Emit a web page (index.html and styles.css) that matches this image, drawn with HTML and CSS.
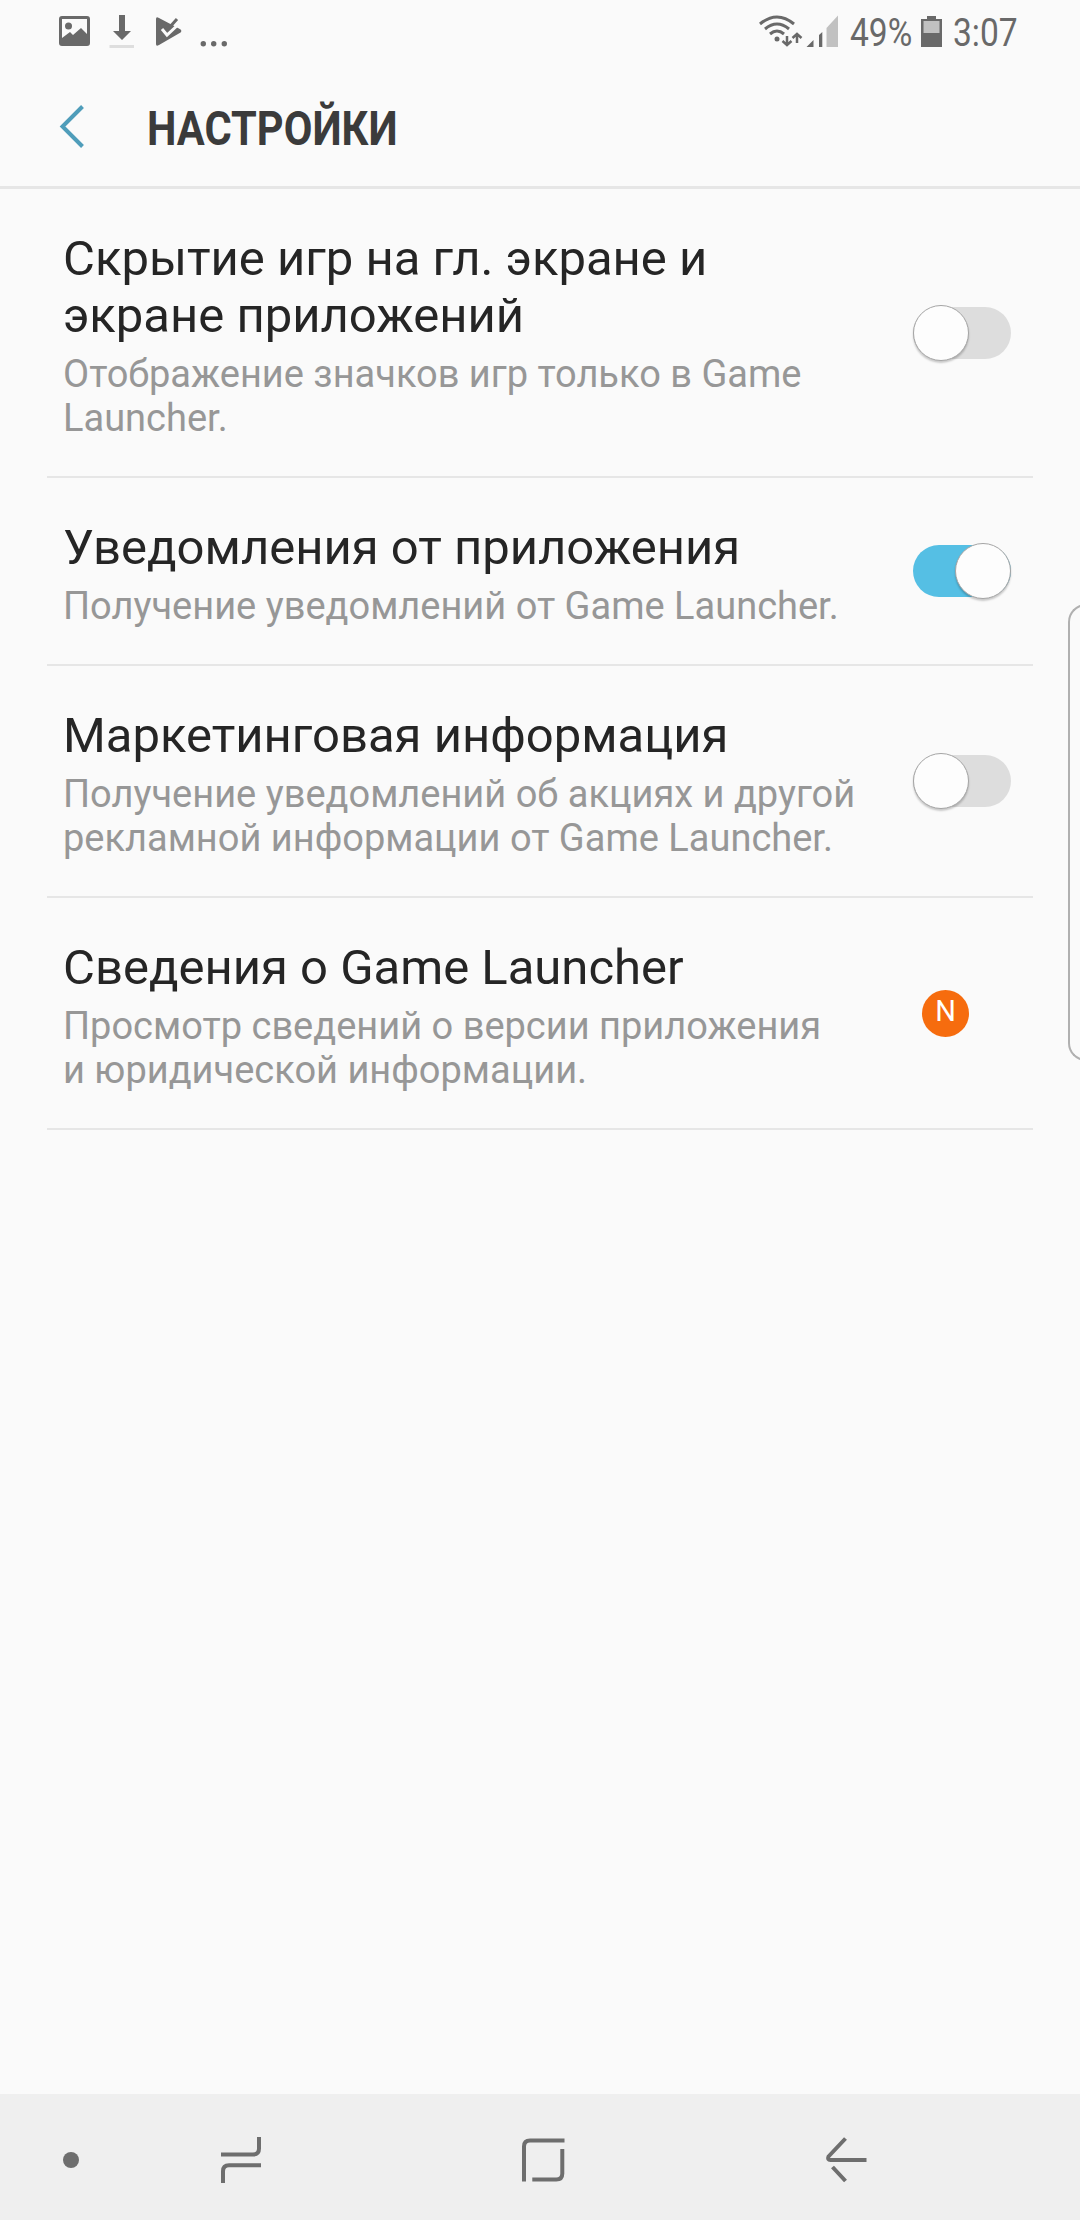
FILE: index.html
```html
<!DOCTYPE html>
<html lang="ru">
<head>
  <meta charset="UTF-8" />
  <meta name="viewport" content="width=device-width, initial-scale=1.0"/>
  <title>Настройки</title>
  <link rel="stylesheet" href="styles.css">
</head>
<body>

  <!-- Статус-бар -->
  <div class="status-bar">
    <svg class="status-left" width="170" height="60" viewBox="0 0 170 60">
      <path fill="#696969" fill-rule="evenodd" d="M3 16h25q3 0 3 3v24q0 3-3 3H3q-3 0-3-3V19q0-3 3-3zM3 19v19l8-6 3 3 8-7 6 6V19z"/>
      <circle cx="9.500" cy="26" r="3.500" fill="#696969"/>
      <path fill="#696969" d="M60 15h6v16h6l-9 9-9-9h6z"/>
      <path fill="#dedede" d="M50.500 45h24.500v3h-24.500z"/>
      <path fill="#696969" d="M97 19q0-3 3-1l19 10q7 3 0 6l-19 11q-3 2-3-1z"/>
      <path fill="none" stroke="#fafafa" stroke-width="3" d="M103 29l5 6 14-13"/>
      <path fill="none" stroke="#696969" stroke-width="3" d="M105 25l4 4 9-10"/>
      <g fill="#696969"><circle cx="144.300" cy="43.700" r="2.700"/><circle cx="154.700" cy="43.700" r="2.700"/><circle cx="165.300" cy="43.700" r="2.700"/></g>
    </svg>
    <div class="status-right">
      <svg width="82" height="60" viewBox="0 0 82 60">
        <g fill="none" stroke="#696969" stroke-width="3">
          <path d="M1 24q17-14 34 0"/>
          <path d="M6 29q12-10 24 0"/>
          <path d="M11 34q7-6 14 0"/>
          <path d="M28 36v9M23.500 41l4.500 4 4.500-4M38 43v-9M33.500 38l4.500-4 4.500 4" stroke-width="2.500"/>
        </g>
        <circle cx="18" cy="39" r="2.500" fill="#696969"/>
        <path fill="#696969" d="M47.500 47h7v-7zM60 47h3.300V32L60 35z"/>
        <path fill="#c1c1c1" d="M67.500 47V28L79 15.500V47z"/>
      </svg>
      <span class="status-text percent">49%</span>
      <svg class="battery" width="21" height="60" viewBox="0 0 21 60">
        <path fill="#696969" d="M6 16h9v3h6v28H0V19h6z"/>
        <path fill="#c1c1c1" d="M2.500 21h16v12h-16z"/>
      </svg>
      <span class="status-text clock">3:07</span>
    </div>
  </div>

  <header class="header">
    <svg width="26" height="44" viewBox="0 0 26 44">
      <path fill="none" stroke="#4f9dba" stroke-width="4" d="M23.500 2.500L3.500 22.500l20 20"/>
    </svg>
    <h1>НАСТРОЙКИ</h1>
  </header>

  <main class="list">
    <div class="item">
      <div class="text">
        <h2>Скрытие игр на гл. экране и<br>экране приложений</h2>
        <p>Отображение значков игр только в Game<br>Launcher.</p>
      </div>
      <div class="switch"><span class="thumb"></span></div>
    </div>
    <div class="item">
      <div class="text">
        <h2>Уведомления от приложения</h2>
        <p>Получение уведомлений от Game Launcher.</p>
      </div>
      <div class="switch on"><span class="thumb"></span></div>
    </div>
    <div class="item">
      <div class="text">
        <h2>Маркетинговая информация</h2>
        <p>Получение уведомлений об акциях и другой<br>рекламной информации от Game Launcher.</p>
      </div>
      <div class="switch"><span class="thumb"></span></div>
    </div>
    <div class="item">
      <div class="text">
        <h2>Сведения о Game Launcher</h2>
        <p>Просмотр сведений о версии приложения<br>и юридической информации.</p>
      </div>
      <span class="badge">N</span>
    </div>
  </main>

  <!-- Боковая панель Edge -->
  <div class="edge-handle"></div>

  <!-- Навигация -->
  <nav class="nav-bar">
    <span class="dot"></span>
    <svg class="recents" width="42" height="48" viewBox="0 0 42 48" fill="none" stroke="#6e6e6e" stroke-width="4">
      <path d="M1 18.500h32q6 0 6-6V1M41 29.300H9q-6 0-6 6V47"/>
    </svg>
    <svg class="home" width="44" height="46" viewBox="0 0 44 46" fill="none" stroke="#6e6e6e" stroke-width="4">
      <path d="M2 44.500V9.500q0-6 6-6h34.500M40.300 12v24.500q0 6-6 6h-24"/>
    </svg>
    <svg class="back" width="42" height="48" viewBox="0 0 42 48" fill="none" stroke="#6e6e6e" stroke-width="4">
      <path d="M20.500 2.500L3.500 20.500q-1.500 3.500 2 3.500h36M7.500 31L20.500 45"/>
    </svg>
  </nav>

</body>
</html>
```
FILE: styles.css
```css
:root {
  --bg: #fafafa;
  --text: #252525;
  --muted: #979797;
  --line: #e6e6e6;
  --icon: #696969;
  --accent: #55bfe4;
}

* {
  box-sizing: border-box;
}

body {
  margin: 0;
  min-height: 2220px;
  font-family: Roboto, sans-serif;
  background: var(--bg);
  color: var(--text);
  display: flex;
  flex-direction: column;
  overflow: hidden;
}

.status-bar {
  height: 66px;
  padding: 0 60px 0 59px;
  display: flex;
  justify-content: space-between;
}

.status-right {
  display: flex;
}

.status-text {
  font-size: 39px;
  line-height: 66px;
  color: var(--icon);
  transform: scaleX(0.86);
  transform-origin: left;
  white-space: nowrap;
}

.percent {
  width: 62px;
  margin-left: 9px;
}

.battery {
  margin-left: 9px;
}

.clock {
  width: 67px;
  margin-left: 11px;
}

.header {
  height: 123px;
  padding: 0 0 0 59px;
  border-bottom: 3px solid var(--line);
  display: flex;
  align-items: center;
}

h1 {
  margin: 4px 0 0 62px;
  font-size: 49px;
  line-height: 57px;
  font-weight: 700;
  color: #3b3b3b;
  transform: scaleX(0.85);
  transform-origin: left;
}

.list {
  flex: 1;
  padding: 0 47px;
}

.item {
  display: flex;
  align-items: center;
  justify-content: space-between;
  padding: 0 22px 0 16px;
  border-bottom: 2px solid var(--line);
}

.text {
  padding: 41px 0 36px;
  white-space: nowrap;
}

h2 {
  margin: 0 0 8px;
  font-size: 49px;
  line-height: 57px;
  font-weight: 400;
}

p {
  margin: 0;
  font-size: 38px;
  line-height: 44px;
  color: var(--muted);
}

.switch {
  width: 98px;
  height: 52px;
  border-radius: 26px;
  background: #dddddd;
  display: flex;
  align-items: center;
}

.thumb {
  width: 56px;
  height: 56px;
  flex: none;
  border: 1px solid #a5a5a5;
  border-radius: 50%;
  background: #fdfdfd;
  box-shadow: 0 2px 2px rgba(0,0,0,0.2);
}

.switch.on {
  background: var(--accent);
  justify-content: flex-end;
}

.badge {
  width: 47px;
  height: 47px;
  margin-right: 42px;
  border-radius: 50%;
  background: #f66c0e;
  color: white;
  font-size: 29px;
  line-height: 43px;
  text-align: center;
}

.edge-handle {
  position: absolute;
  top: 604px;
  right: -6px;
  width: 18px;
  height: 457px;
  border: 2px solid #b0b0b0;
  border-right: none;
  border-radius: 18px 0 0 18px;
}

.nav-bar {
  height: 126px;
  padding: 6px 0 0 63px;
  background: #efefef;
  display: flex;
  align-items: center;
}

.dot {
  width: 16px;
  height: 16px;
  border-radius: 50%;
  background: #6e6e6e;
}

.recents {
  margin-left: 141px;
}

.home {
  margin-left: 260px;
}

.back {
  margin-left: 259px;
}
```
